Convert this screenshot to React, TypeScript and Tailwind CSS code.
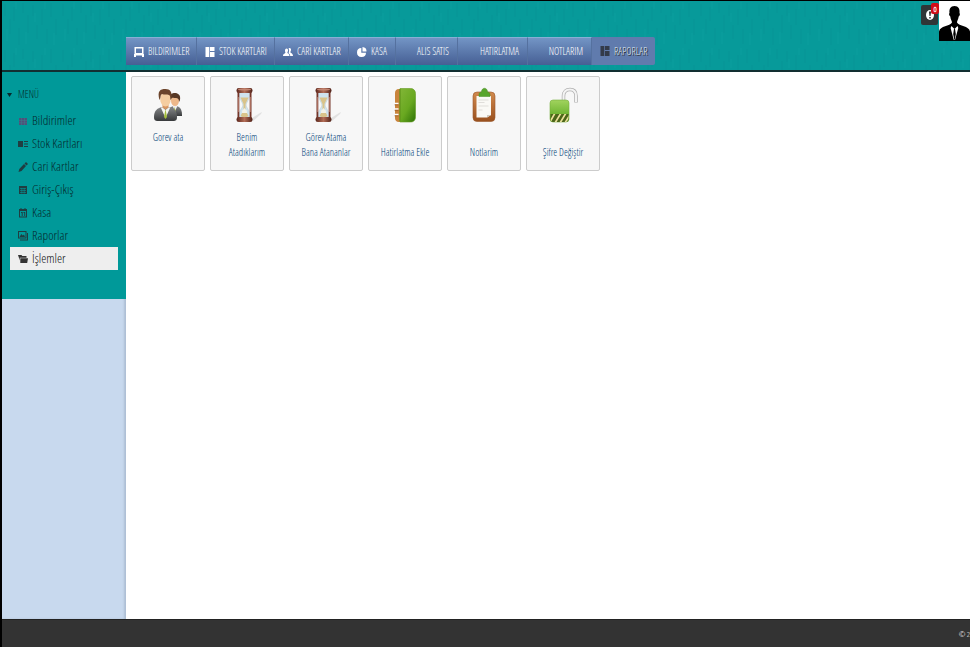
import type { ReactNode } from "react";
import clsx from "clsx";

type NavItem = { label: string; icon?: ReactNode; className: string };
type MenuItem = { label: string; icon: ReactNode; active?: boolean };
type Shortcut = { lines: string[]; icon: ReactNode };

/* --- Small glyphs --- */

const BoardGlyph = () => (
  <svg viewBox="0 0 10 10" className="size-2.5 shrink-0" fill="currentColor">
    <path d="M0.500 0h9v7h.5v3H8V8.500H2V10H0V7h.5zM2 1.500V6h6V1.500z" fillRule="evenodd" />
  </svg>
);

const TilesGlyph = () => (
  <svg viewBox="0 0 10 10" className="size-2.5 shrink-0" fill="currentColor">
    <path d="M0.500 0h3.800v10H.5zM5 0h4.500v4H5zM5 5h4.500v5H5z" />
  </svg>
);

const PeopleGlyph = () => (
  <svg viewBox="0 0 10 10" className="size-2.5 shrink-0" fill="currentColor">
    <path d="M3.500 1.500c1.200 0 1.700 1 1.500 2.200-.1.800-.5 1.300-.7 1.800 0 1 2.200 1 2.200 3.500H0c0-2.500 2.500-2.500 2.500-3.500C1.800 4.500 1.700 1.500 3.500 1.500z" />
    <path d="M6.500 1c1.300 0 1.700 1 1.500 2.200-.1.700-.5 1.300-.7 1.800 0 1 2.700 1 2.700 4H7.200c0-1.500-.7-2.200-1.700-2.800.6-1 .9-3.200.1-4.700.2-.4.500-.5.900-.5z" />
  </svg>
);

const PieGlyph = () => (
  <svg viewBox="0 0 10 10" className="size-2.5 shrink-0" fill="currentColor">
    <path d="M4.300 1v4.700H9A4.500 4.500 0 1 1 4.300 1z" />
    <path d="M5.500 0A4.300 4.300 0 0 1 9.500 4.500h-4z" />
  </svg>
);

const GridGlyph = () => (
  <svg viewBox="0 0 10 10" className="size-2.5 shrink-0">
    <path d="M1 2h8v7H1z" fill="#50507a" />
    <path d="M1 4.500h8M1 6.800h8M3.500 2v7M6.500 2v7" stroke="#3d7d8c" strokeWidth="0.500" />
  </svg>
);

const CardGlyph = () => (
  <svg viewBox="0 0 10 10" className="size-2.5 shrink-0" fill="currentColor">
    <path d="M0 2h5v6H0zM6 2h4v1H6zM6 4.500h4v1H6zM6 7h4v1H6z" />
  </svg>
);

const PencilGlyph = () => (
  <svg viewBox="0 0 10 10" className="size-2.5 shrink-0" fill="currentColor">
    <path d="M8 0 10 2 8.500 3.500 6.500 1.500zM6 2l2 2-4.500 5L.5 10l.8-3z" />
  </svg>
);

const TableGlyph = () => (
  <svg viewBox="0 0 10 10" className="size-2.5 shrink-0">
    <path d="M1 1h8v8H1z" fill="currentColor" />
    <path d="M2 3.500h6M2 5.500h6M2 7.500h6M3.800 3v5.500M6.200 3v5.500" stroke="#009999" strokeWidth="0.600" />
  </svg>
);

const CalendarGlyph = () => (
  <svg viewBox="0 0 10 10" className="size-2.5 shrink-0" fill="currentColor">
    <path d="M1 1h8v8.500H1zM2 3v5.500h6V3z" fillRule="evenodd" />
    <path d="M2.500 0h1v2h-1zM6.500 0h1v2h-1zM3 4h1.700v4h-1V5H3zM5.500 4h1.700v4h-1V5h-.7z" />
  </svg>
);

const PicturesGlyph = () => (
  <svg viewBox="0 0 10 10" className="size-2.5 shrink-0" fill="currentColor">
    <path d="M0 0h8.500v7.500H0zM1 1v5.500h6.500V1z" fillRule="evenodd" />
    <path d="M1.500 6 3.300 3l1.500 1.500L6 3.500 7 6zM9 2h1v7.500H2v-1h7z" />
  </svg>
);

const FolderGlyph = () => (
  <svg viewBox="0 0 10 10" className="size-2.5 shrink-0" fill="currentColor">
    <path d="M0 1h3.500l.8 1H8.500v1.700H1.800v2.800zM2.300 4.300H10L9.200 9H2.300z" />
  </svg>
);

/* --- Shortcut drawings --- */

const UsersArt = () => (
  <svg viewBox="0 0 36 36" className="size-9">
    <defs>
      <linearGradient id="suit" x2="0" y2="1">
        <stop stopColor="#858789" />
        <stop offset="1" stopColor="#383a3c" />
      </linearGradient>
    </defs>
    <path d="M18 28c0-7 3-9 7-9s7 2 7 9v1H18z" fill="url(#suit)" />
    <path d="M23 17h4v3l-2 4-2-4z" fill="#eee" />
    <path d="m24.500 20-1 6 1.500 2 1-2z" fill="#92aa36" />
    <ellipse cx="25" cy="13.500" rx="4" ry="5.500" fill="#edb88a" />
    <path d="M20 13c-1-6 2-7 5-7s6 2 5 7l-1 2c0-3-1-4-3-4s-4-1-5 1z" fill="#563724" />
    <path d="M4 30c0-6 3-9 8-10h7c5 1 8 4 8 10 0 3-1 4-4 4H8c-3 0-4-1-4-4z" fill="url(#suit)" />
    <path d="m12 20 3.500 3 3.500-3 1 1-4.500 10-4.500-10z" fill="#f4f4ee" />
    <path d="m15.500 22-1.500 8 1.500 2 1.500-2z" fill="#a3bd3b" />
    <path d="M12.500 17h6v3.500l-3 2-3-2z" fill="#d79561" />
    <ellipse cx="15.500" cy="12" rx="5.300" ry="7.500" fill="#f5cda0" />
    <path d="M9.500 13C7 4 10 2 15.500 2 20 2 23 5 21 13c-1-1 0-4-2-5-2-1-5 0-7-1-2 1-1 4-2.500 6z" fill="#6c442b" />
  </svg>
);

const HourglassArt = () => (
  <svg viewBox="-2 0 36 36" className="size-9">
    <defs>
      <linearGradient id="wood">
        <stop stopColor="#59251c" />
        <stop offset="0.500" stopColor="#b46e57" />
        <stop offset="1" stopColor="#4f2118" />
      </linearGradient>
    </defs>
    <path d="m18 33 11-7 2-1-1 2-8 7z" fill="#cbcbcb" opacity="0.500" />
    <path d="M8 5h11c0 7-3 9-4 13 1 4 4 5 4 12H8c0-7 3-8 4-12-1-4-4-6-4-13z" fill="#cfe3ee" stroke="#b9c9d1" strokeWidth="0.500" />
    <path d="M9.500 10.500h8L14.500 17v6l3 6-4 2-4-2 3-6v-6z" fill="#d9c38a" />
    <path d="m11 24 2.500-3 2.500 3v2h-5z" fill="#f3f2e6" />
    <path d="M6.500 5h1.800v26H6.500zM18.700 5h1.800v26h-1.800z" fill="#743528" />
    <path d="M7.500 10v15M19.500 10v15" stroke="#be8271" strokeWidth="0.700" />
    <rect x="5.500" y="1" width="16" height="5" rx="2.300" fill="url(#wood)" />
    <rect x="5.500" y="30" width="16" height="5" rx="2.300" fill="url(#wood)" />
    <ellipse cx="13.500" cy="2.500" rx="6.500" ry="1" fill="#c28673" />
  </svg>
);

const NotebookArt = () => (
  <svg viewBox="0 0 36 36" className="size-9">
    <defs>
      <linearGradient id="cover" x2="0.800" y2="1">
        <stop stopColor="#82b637" />
        <stop offset="0.600" stopColor="#69a820" />
        <stop offset="1" stopColor="#397d0b" />
      </linearGradient>
    </defs>
    <path d="M12 2h6v33h-6c-3 0-4-2-4-4V6c0-2 1-4 4-4z" fill="#c9843d" />
    <path d="M13 1.500h10.500c3 0 5 2 5 5V29.500c0 4-2 5.500-5 5.500H13z" fill="url(#cover)" stroke="#659b23" strokeWidth="0.600" />
    <path d="M13 2v32" stroke="#5f941b" />
    <path d="M7.500 16.500h4M7.500 22h4M7.500 27.500h4" stroke="#fff" strokeWidth="1.600" />
    <path d="M7.500 17.800h4M7.500 23.300h4M7.500 28.800h4" stroke="#8f501d" strokeWidth="0.600" />
  </svg>
);

const ClipboardArt = () => (
  <svg viewBox="0 0 36 36" className="size-9">
    <defs>
      <linearGradient id="board" x2="0" y2="1">
        <stop stopColor="#d28a4e" />
        <stop offset="1" stopColor="#99501e" />
      </linearGradient>
    </defs>
    <rect x="7" y="5" width="22" height="29.500" rx="4" fill="url(#board)" stroke="#9b592b" strokeWidth="0.600" />
    <path d="M10.500 9h14.500v19l-4 2.500H10.500z" fill="#faf9f5" />
    <path d="M25 28h-4v2.500z" fill="#cecac0" />
    <path d="M12.500 13h10M12.500 15.500h6M12.500 19h10M12.500 23h4" stroke="#d4d3cf" strokeWidth="0.700" />
    <path d="M13 8c0-2 1-3 2.500-3 0-5 6-5 6 0C23 5 24 6 24 8v1.500H13z" fill="#58a52c" stroke="#478c25" strokeWidth="0.500" />
  </svg>
);

const PadlockArt = () => (
  <svg viewBox="0 0 36 36" className="size-9">
    <defs>
      <linearGradient id="lock" x2="0" y2="1">
        <stop stopColor="#a1d35e" />
        <stop offset="1" stopColor="#55a51b" />
      </linearGradient>
      <clipPath id="lock-base">
        <path d="M5.500 27h18v5q0 3-3 3h-12q-3 0-3-3z" />
      </clipPath>
    </defs>
    <path d="M18.500 13V9c0-4 2.500-6.500 6.500-6.500s6 2.500 6 6.500v6.500" fill="none" stroke="#b0b0b0" strokeWidth="3.500" />
    <path d="M18.500 13V9c0-4 2.500-6.500 6.500-6.500s6 2.500 6 6.500v6" fill="none" stroke="#f4f4f4" strokeWidth="2" />
    <rect x="5" y="13" width="19" height="22" rx="3" fill="url(#lock)" stroke="#75ae3c" strokeWidth="0.600" />
    <g clipPath="url(#lock-base)">
      <path d="M5 26h19v9H5z" fill="#4b6619" />
      <path d="m5 35 5-9M10 36l6-10M15 36l6-10M20 36l6-10" stroke="#e9df9a" strokeWidth="1.700" />
    </g>
  </svg>
);

const Avatar = () => (
  <svg viewBox="0 0 31 40" className="h-10 w-[31px] bg-white">
    <path d="M15.500 5c4 0 5.500 3 5 7 1 1 0 3-.8 3.500-.4 3-1.700 4-1.700 6 2 4 12 3 13 9V40H0v-9.500c1-6 11-5 13-9 0-2-1.500-3-1.700-6-1-1-1.800-2.500-.8-3.500-.5-4 1-7 5-7z" />
    <path d="m12.500 25 3 3 3-3 .8 2-3.300 12h-1.200L11.600 27z" fill="#fff" />
    <path d="m15 28-.8 5 1.300 7 1.300-7-.8-5z" />
  </svg>
);

const HeaderTexture = () => (
  <svg className="absolute inset-0 size-full" aria-hidden="true">
    <defs>
      <pattern id="grain" width="58" height="46" patternUnits="userSpaceOnUse">
        <path
          d="M3 3v12M8 18v15M12 6v14M17 27v17M21 2v10M26 14v18M31 4v11M35 24v14M40 8v16M45 28v15M49 2v14M54 18v16"
          stroke="#047b80"
          strokeOpacity="0.180"
        />
        <path d="M5 28v12M14 1v7M24 31v12M33 12v9M43 1v7M52 32v12" stroke="#2bb0ab" strokeOpacity="0.150" />
      </pattern>
    </defs>
    <rect width="100%" height="100%" fill="url(#grain)" />
  </svg>
);

/* --- Page data --- */

const navItems: NavItem[] = [
  { label: "BILDIRIMLER", icon: <BoardGlyph />, className: "w-[71px]" },
  { label: "STOK KARTLARI", icon: <TilesGlyph />, className: "w-[78px]" },
  { label: "CARİ KARTLAR", icon: <PeopleGlyph />, className: "w-[74px]" },
  { label: "KASA", icon: <PieGlyph />, className: "w-[47px]" },
  { label: "ALIS SATIS", className: "w-[62px] justify-end" },
  { label: "HATIRLATMA", className: "w-[70px] justify-end" },
  { label: "NOTLARIM", className: "w-[64px] justify-end" },
];

const menuItems: MenuItem[] = [
  { label: "Bildirimler", icon: <GridGlyph /> },
  { label: "Stok Kartları", icon: <CardGlyph /> },
  { label: "Cari Kartlar", icon: <PencilGlyph /> },
  { label: "Giriş-Çıkış", icon: <TableGlyph /> },
  { label: "Kasa", icon: <CalendarGlyph /> },
  { label: "Raporlar", icon: <PicturesGlyph /> },
  { label: "İşlemler", icon: <FolderGlyph />, active: true },
];

const shortcuts: Shortcut[] = [
  { lines: ["Gorev ata"], icon: <UsersArt /> },
  { lines: ["Benim", "Atadıklarım"], icon: <HourglassArt /> },
  { lines: ["Görev Atama", "Bana Atananlar"], icon: <HourglassArt /> },
  { lines: ["", "Hatirlatma Ekle"], icon: <NotebookArt /> },
  { lines: ["", "Notlarim"], icon: <ClipboardArt /> },
  { lines: ["", "Şifre Değiştir"], icon: <PadlockArt /> },
];

export default function App() {
  return (
    <div className="flex min-h-screen flex-col overflow-hidden border-l-2 border-t border-black bg-white font-['Open_Sans_Condensed_Light','Open_Sans_Condensed','Liberation_Sans_Narrow','Open_Sans',sans-serif] font-light">
      <header className="relative flex h-[71px] shrink-0 items-end justify-between border-b-2 border-[#122f31] bg-[#079a9a]">
        <HeaderTexture />

        <nav className="relative mb-[5px] ml-[124px] flex h-7 whitespace-nowrap text-[10px] text-white">
          {navItems.map((item) => (
            <a
              key={item.label}
              href="#"
              className={clsx(
                "flex items-center gap-1 border-r border-t border-r-[#55719f] border-t-[#88afd4] bg-linear-to-b from-[#7395c5] to-[#465f94] px-2",
                item.className
              )}
            >
              {item.icon}
              {item.label}
            </a>
          ))}
          <a href="#" className="flex w-[63px] items-center gap-1 rounded-r-xs bg-[#607bad] px-2 text-[#dce1e9] [text-shadow:1px_1px_0_#222]">
            <span className="text-[#333b49]">
              <TilesGlyph />
            </span>
            RAPORLAR
          </a>
        </nav>

        <div className="relative flex items-start self-start">
          <button
            type="button"
            aria-label="Bildirimler"
            className="relative mt-1 mr-px flex h-5 w-[17px] items-center justify-center rounded-xs bg-[#303637]"
          >
            <svg viewBox="0 0 10 12" className="h-3 w-2.5">
              <ellipse cx="5" cy="6" rx="4" ry="5" fill="#fff" />
              <path d="M4 2.500h2L5.500 7h-1zM4.300 8h1.400v1.500H4.300z" fill="#222" />
            </svg>
            <span className="absolute -top-0.5 -right-px flex h-[11px] w-2 items-center justify-center rounded-xs bg-[#cf0d17] text-[8px] font-bold text-white">
              0
            </span>
          </button>
          <Avatar />
        </div>
      </header>

      <div className="flex flex-1">
        <aside className="flex w-[124px] shrink-0 flex-col bg-[#c8d9ee] shadow-[inset_-2px_0_2px_#aebfd4]">
          <div className="bg-[#009999] pb-[29px] text-[#06292d]">
            <button type="button" className="flex h-[37px] w-full items-center gap-1.5 px-[5px] pt-2 text-[10px]">
              <svg viewBox="0 0 5 4" className="h-1 w-[5px]" fill="currentColor">
                <path d="M0 0h5L2.500 4z" />
              </svg>
              MENÜ
            </button>
            <ul className="px-2 text-[13px]">
              {menuItems.map((item) => (
                <li key={item.label}>
                  <a
                    href="#"
                    className={clsx(
                      "flex h-[23px] items-center gap-1 px-2",
                      item.active && "bg-[#eeeeee] text-[#111111]"
                    )}
                  >
                    <span className={clsx(item.active ? "text-[#333333]" : "text-[#203d41]")}>{item.icon}</span>
                    {item.label}
                  </a>
                </li>
              ))}
            </ul>
          </div>
        </aside>

        <main className="flex flex-1 flex-wrap content-start gap-[5px] px-[5px] py-1">
          {shortcuts.map((item) => (
            <a
              key={item.lines.join(" ")}
              href="#"
              className="flex h-[95px] w-[74px] flex-col items-center rounded-xs border border-[#cccccc] bg-[#f7f7f7] pt-2.5 text-[10px] leading-[15px] whitespace-nowrap text-[#003f78]"
            >
              <span className="mb-[7px]">{item.icon}</span>
              {item.lines.map((line, i) => (
                <span key={i} className="h-[15px]">
                  {line}
                </span>
              ))}
            </a>
          ))}
        </main>
      </div>

      <footer className="flex h-7 shrink-0 items-center justify-end border-t border-[#222222] bg-[#333333] text-[8px] whitespace-nowrap text-white">
        © 2
      </footer>
    </div>
  );
}
